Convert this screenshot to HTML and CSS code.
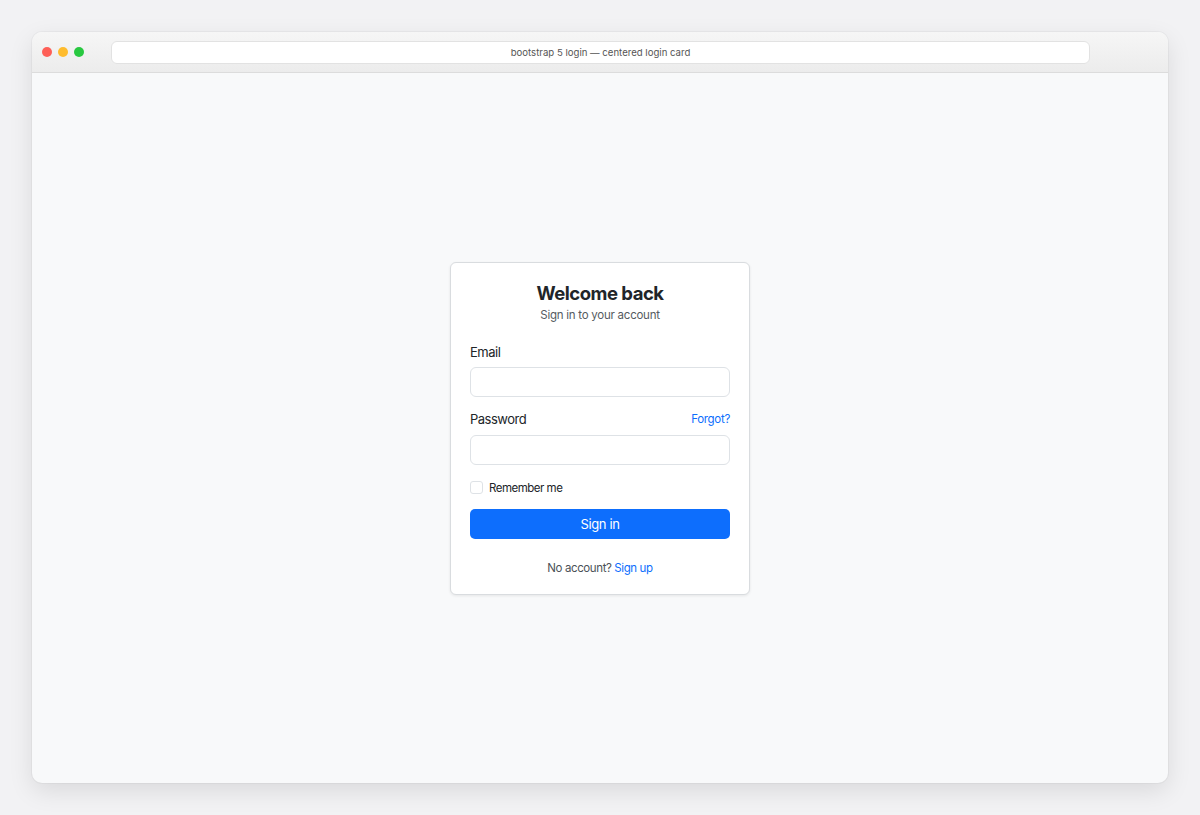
FILE: index.html
```html
<!DOCTYPE html>
<html>
<head>
<meta charset="utf-8">
<link rel="stylesheet" href="styles.css">
</head>
<body>
<div class="window">
  <div class="titlebar">
    <div class="dots">
      <span class="dot red"></span>
      <span class="dot yellow"></span>
      <span class="dot green"></span>
    </div>
    <div class="address">bootstrap 5 login — centered login card</div>
  </div>
  <div class="content">
    <form class="card">
      <h1 class="title">Welcome back</h1>
      <p class="subtitle">Sign in to your account</p>
      <div class="field field-email">
        <label class="label">Email</label>
        <input class="input" type="email">
      </div>
      <div class="field">
        <div class="label-row">
          <label class="label">Password</label>
          <a class="link small">Forgot?</a>
        </div>
        <input class="input" type="password">
      </div>
      <label class="check">
        <span class="box"></span>
        <span>Remember me</span>
      </label>
      <button class="btn" type="button">Sign in</button>
      <p class="footer">No account? <a class="link">Sign up</a></p>
    </form>
  </div>
</div>
</body>
</html>
```
FILE: styles.css
```css
* { box-sizing: border-box; }
html, body { margin: 0; height: 100%; }
body {
  background: #f2f2f4;
  padding: 32px;
  font-family: Inter, "Liberation Sans", Arial, sans-serif;
  color: #212529;
}
.window {
  height: 751px;
  background: #f8f9fa;
  border-radius: 10px;
  box-shadow: 0 8px 24px rgba(0,0,0,0.10), 0 0 0 1px rgba(0,0,0,0.03);
  display: flex;
  flex-direction: column;
  overflow: hidden;
}
.titlebar {
  height: 41px;
  flex: none;
  background: linear-gradient(#f6f6f6, #ececec);
  border-bottom: 1px solid #dcdcdc;
  display: flex;
  align-items: center;
  padding: 0 0 0 10px;
}
.dots { display: flex; gap: 6px; width: 69px; }
.dot { width: 10px; height: 10px; border-radius: 50%; display: block; }
.red { background: #fe5f57; }
.yellow { background: #febc2e; }
.green { background: #28c840; }
.address {
  width: 979px;
  height: 23px;
  background: #fff;
  border: 1px solid #e2e2e2;
  border-radius: 6px;
  font-size: 9.6px;
  color: #555;
  display: flex;
  align-items: center;
  justify-content: center;
}
.content {
  flex: 1;
  display: flex;
  align-items: center;
  justify-content: center;
}
.card {
  width: 300px;
  background: #fff;
  border: 1px solid #d9dcdf;
  border-radius: 6px;
  box-shadow: 0 1px 3px rgba(0,0,0,0.08);
  padding: 19px 19px 16px;
}
.title {
  margin: 0;
  font-size: 18.5px;
  line-height: 23px;
  font-weight: 700;
  text-align: center;
  letter-spacing: -0.5px;
}
.subtitle {
  margin: 0;
  font-size: 11.5px;
  line-height: 20px;
  color: #555b61;
  text-align: center;
  letter-spacing: -0.25px;
}
.field-email { margin-top: 17px; }
.field + .field { margin-top: 12px; }
.label-row { display: flex; justify-content: space-between; align-items: center; }
.label {
  display: block;
  font-size: 13px;
  letter-spacing: -0.5px;
  line-height: 21px;
  margin-bottom: 4px;
}
.label-row .label { margin-bottom: 5px; }
.link { color: #0d6efd; text-decoration: none; }
.small { font-size: 11.5px; letter-spacing: -0.3px; margin-top: -5px; }
.input {
  display: block;
  width: 100%;
  height: 30px;
  border: 1px solid #dee2e6;
  border-radius: 6px;
  background: #fff;
  font: inherit;
}
.check {
  display: flex;
  align-items: center;
  gap: 6px;
  margin-top: 13px;
  font-size: 11.5px;
  letter-spacing: -0.5px;
  line-height: 20px;
}
.box {
  width: 13px;
  height: 13px;
  border: 1px solid #dee2e6;
  border-radius: 3px;
  background: #fff;
}
.btn {
  display: block;
  width: 100%;
  height: 30px;
  margin-top: 11px;
  border: none;
  border-radius: 5px;
  background: #0d6efd;
  color: #fff;
  font-family: inherit;
  font-size: 13px;
  letter-spacing: -0.4px;
}
.footer {
  margin: 19px 0 0;
  text-align: center;
  font-size: 11.5px;
  letter-spacing: -0.4px;
  line-height: 20px;
  color: #4b5157;
}
```
